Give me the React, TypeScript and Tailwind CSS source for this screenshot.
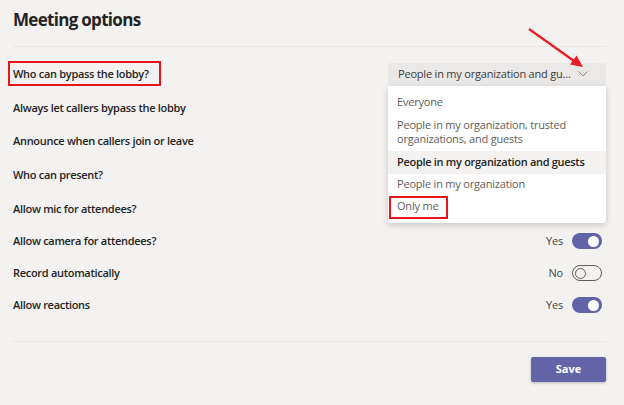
import React from "react";

const font = { fontFamily: '"Open Sans", "Noto Sans", sans-serif' };

function Toggle({ on }: { on: boolean }) {
  return on ? (
    <div className="w-[30px] h-[16px] rounded-full bg-[#6264a7] flex items-center justify-end pr-[3px]">
      <div className="w-[11px] h-[11px] rounded-full bg-white" />
    </div>
  ) : (
    <div className="w-[30px] h-[16px] rounded-full border border-[#605e5c] flex items-center pl-[2px]">
      <div className="w-[11px] h-[11px] rounded-full border border-[#605e5c]" />
    </div>
  );
}

function Row({ label, children, boxed, h }: { label: string; children?: React.ReactNode; boxed?: boolean; h: string }) {
  return (
    <div className={`${h} flex items-center justify-between relative`}>
      <div className="relative h-[14px] flex items-center">
        {boxed && <div className="absolute left-[-5px] top-[-6px] w-[153px] h-[25px] border-2 border-[#e8141b]" />}
        <span className="text-[11px] font-semibold tracking-[-0.3px] text-[#252423] leading-[14px]">{label}</span>
      </div>
      {children}
    </div>
  );
}

function YesNo({ on }: { on: boolean }) {
  return (
    <div className="flex items-center gap-[9px] pr-[4px]">
      <span className="text-[11px] tracking-[-0.2px] text-[#484644]">{on ? "Yes" : "No"}</span>
      <Toggle on={on} />
    </div>
  );
}

export default function App() {
  return (
    <div className="w-[624px] h-[405px] bg-[#f3f2f1] relative overflow-hidden" style={font}>
      <div className="pl-[13px] pr-[18px]">
        <h1 className="text-[17px] font-bold tracking-[-0.7px] text-[#252423] leading-[24px] pt-[8px] pb-[14px]">Meeting options</h1>
        <div className="h-px bg-[#e9e7e5]" />
        <div className="pt-[10px]">
          <Row h="h-[34px]" label="Who can bypass the lobby?" boxed>
            <div className="relative w-[218px]">
              <div className="h-[23px] bg-[#ebe9e7] flex items-center justify-between pl-[10px] pr-[18px] rounded-t-[2px]">
                <span className="text-[11px] tracking-[-0.2px] text-[#3b3a39] whitespace-nowrap">People in my organization and gu...</span>
                <svg width="10" height="6" viewBox="0 0 10 6" fill="none">
                  <path d="M0.5 0.5 L5 5 L9.5 0.5" stroke="#8a8886" strokeWidth="1" />
                </svg>
              </div>
              <div className="absolute left-0 top-[23px] w-[218px] bg-white rounded-b-[3px] shadow-[0_2px_6px_rgba(0,0,0,0.18)] pt-[6px] pb-[5px] z-10 text-[11px] tracking-[-0.2px] text-[#605e5c]">
                <div className="h-[22px] flex items-center px-[9px]">Everyone</div>
                <div className="py-[4px] px-[9px] leading-[14px] h-[37px]">
                  People in my organization, trusted
                  <br />
                  organizations, and guests
                </div>
                <div className="h-[23px] flex items-center px-[9px] bg-[#f3f2f1] font-semibold tracking-[-0.3px] text-[#252423] whitespace-nowrap">People in my organization and guests</div>
                <div className="h-[22px] flex items-center px-[9px]">People in my organization</div>
                <div className="h-[22px] flex items-center px-[9px] relative">
                  <div className="absolute left-[1px] top-0 w-[59px] h-[23px] border-2 border-[#e8141b]" />
                  Only me
                </div>
              </div>
            </div>
          </Row>
          <Row h="h-[33px]" label="Always let callers bypass the lobby" />
          <Row h="h-[34px]" label="Announce when callers join or leave" />
          <Row h="h-[34px]" label="Who can present?" />
          <Row h="h-[33px]" label="Allow mic for attendees?" />
          <Row h="h-[32px]" label="Allow camera for attendees?">
            <YesNo on={true} />
          </Row>
          <Row h="h-[32px]" label="Record automatically">
            <YesNo on={false} />
          </Row>
          <Row h="h-[32px]" label="Allow reactions">
            <YesNo on={true} />
          </Row>
        </div>
        <div className="h-px bg-[#e9e7e5] mt-[20px]" />
        <div className="flex justify-end pt-[15px]">
          <button className="w-[75px] h-[25px] bg-[#6264a7] text-white text-[11px] font-bold rounded-[2px] shadow-[0_1px_3px_rgba(0,0,0,0.25)]">Save</button>
        </div>
      </div>
      <svg className="absolute left-0 top-0 pointer-events-none" width="624" height="405" viewBox="0 0 624 405">
        <line x1="529" y1="29" x2="574" y2="61" stroke="#ea1c24" strokeWidth="2.2" />
        <polygon points="583,67 570,64.5 576.5,55.5" fill="#ea1c24" />
      </svg>
    </div>
  );
}
